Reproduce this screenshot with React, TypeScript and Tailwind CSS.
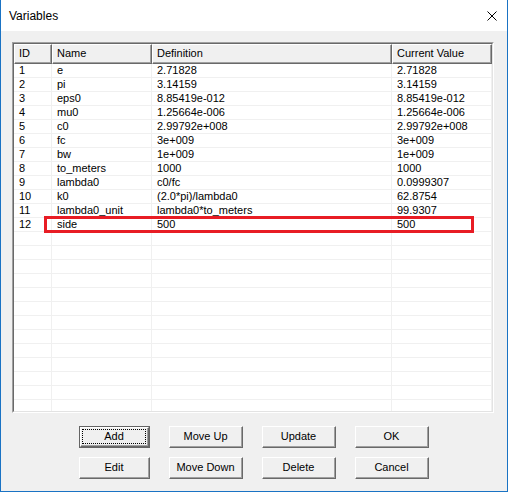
import React from "react";

const rows: string[][] = [
  ["1", "e", "2.71828", "2.71828"],
  ["2", "pi", "3.14159", "3.14159"],
  ["3", "eps0", "8.85419e-012", "8.85419e-012"],
  ["4", "mu0", "1.25664e-006", "1.25664e-006"],
  ["5", "c0", "2.99792e+008", "2.99792e+008"],
  ["6", "fc", "3e+009", "3e+009"],
  ["7", "bw", "1e+009", "1e+009"],
  ["8", "to_meters", "1000", "1000"],
  ["9", "lambda0", "c0/fc", "0.0999307"],
  ["10", "k0", "(2.0*pi)/lambda0", "62.8754"],
  ["11", "lambda0_unit", "lambda0*to_meters", "99.9307"],
  ["12", "side", "500", "500"],
];

const widths = ["w-[38px]", "w-[100px]", "w-[240px]", "w-[100px]"];
const headers = ["ID", "Name", "Definition", "Current Value"];

function Btn({ label, isDefault }: { label: string; isDefault?: boolean }) {
  if (isDefault) {
    return (
      <div className="h-[22px] border border-[#646464] flex">
        <div className="flex-1 flex bg-[#f0f0f0] border-t border-l border-t-white border-l-white border-r border-b border-r-[#696969] border-b-[#696969]">
          <div className="flex-1 flex border-r border-b border-r-[#a0a0a0] border-b-[#a0a0a0] p-[1px]">
            <div className="flex-1 flex items-center justify-center border border-dotted border-black text-[11px] leading-none text-black">
              {label}
            </div>
          </div>
        </div>
      </div>
    );
  }
  return (
    <div className="h-[22px] flex bg-[#f0f0f0] border-t border-l border-t-white border-l-white border-r border-b border-r-[#696969] border-b-[#696969]">
      <div className="flex-1 flex items-center justify-center border-r border-b border-r-[#a0a0a0] border-b-[#a0a0a0] text-[11px] leading-none text-black">
        {label}
      </div>
    </div>
  );
}

export default function App() {
  const total = 25;
  const allRows: string[][] = [];
  for (let i = 0; i < total; i++) allRows.push(rows[i] ?? ["", "", "", ""]);
  return (
    <div
      className="relative w-[508px] h-[492px] flex flex-col border-x border-b border-[#1a73c4] bg-white text-black"
      style={{ fontFamily: '"Liberation Sans", Arial, sans-serif' }}
    >
      <div className="h-[31px] shrink-0 flex items-center justify-between pl-[8px] pr-[10px] bg-white">
        <span className="text-[12px] leading-none">Variables</span>
        <svg width="10" height="10" viewBox="0 0 10 10" className="block">
          <path d="M0.5 0.5 L9.5 9.5 M9.5 0.5 L0.5 9.5" stroke="#000" strokeWidth="1" fill="none" />
        </svg>
      </div>
      <div className="flex-1 bg-[#f0f0f0] flex flex-col pt-[11px] pl-[11px] pr-[13px]">
        <div className="h-[371px] w-[482px] border border-t-[#a0a0a0] border-l-[#a0a0a0] border-r-white border-b-white flex">
          <div className="flex-1 border border-t-[#696969] border-l-[#696969] border-r-[#e3e3e3] border-b-[#e3e3e3] bg-white overflow-hidden flex flex-col">
            <div className="h-[20px] shrink-0 flex bg-[#f0f0f0]">
              {headers.map((h, i) => (
                <div
                  key={h}
                  className={`${widths[i]} h-full flex border-t border-l border-t-white border-l-white border-r border-b border-r-[#696969] border-b-[#696969]`}
                >
                  <div className="flex-1 flex items-center pl-[4px] border-r border-b border-r-[#a0a0a0] border-b-[#a0a0a0] text-[11px] leading-none">
                    {h}
                  </div>
                </div>
              ))}
            </div>
            {allRows.map((r, ri) => (
              <div key={ri} className="h-[14px] shrink-0 flex border-b border-[#f0f0f0]">
                {r.map((c, ci) => (
                  <div
                    key={ci}
                    className={`${widths[ci]} h-full border-r border-[#f0f0f0] pl-[5px] text-[11px] leading-[13px] whitespace-nowrap overflow-hidden`}
                  >
                    {c}
                  </div>
                ))}
              </div>
            ))}
          </div>
        </div>
        <div className="mt-[13px] ml-[67px] grid grid-cols-[71px_74px_74px_74px] gap-x-[19px] gap-y-[9px]">
          <Btn label="Add" isDefault />
          <Btn label="Move Up" />
          <Btn label="Update" />
          <Btn label="OK" />
          <Btn label="Edit" />
          <Btn label="Move Down" />
          <Btn label="Delete" />
          <Btn label="Cancel" />
        </div>
      </div>
      <div className="absolute left-[43px] top-[216px] w-[430px] h-[17px] border-[3px] border-[#e81c24]" />
    </div>
  );
}
